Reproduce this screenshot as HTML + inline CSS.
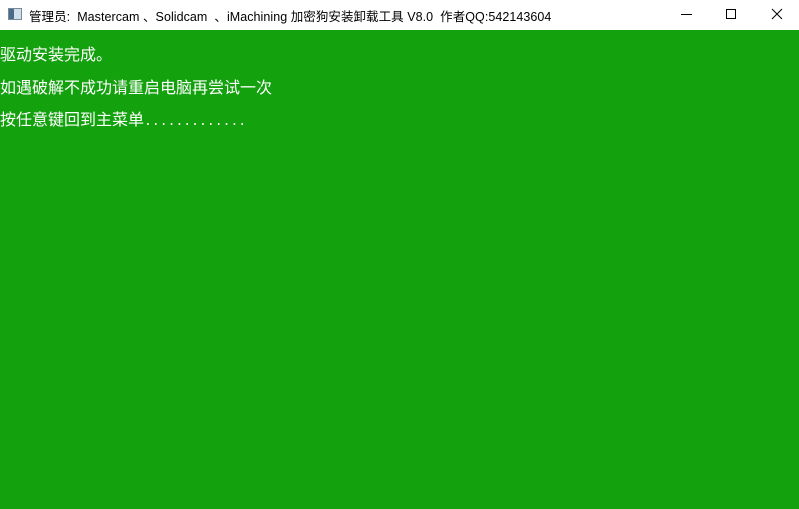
<!DOCTYPE html>
<html><head><meta charset="utf-8"><style>
html,body{margin:0;padding:0;width:799px;height:509px;overflow:hidden;background:#13a10e}
.tb{position:absolute;left:0;top:0;width:799px;height:30px;background:#fff;font:12.5px "Liberation Sans","Noto Sans CJK SC",sans-serif;color:#000}
.tt{position:absolute;left:29px;top:6px;white-space:nowrap;letter-spacing:0.05px}
.ic{position:absolute;left:8px;top:8px;width:14px;height:12px;border:1px solid #7a8a99;box-sizing:border-box;background:linear-gradient(90deg,#4a6a8a 0 40%,#cfe0ea 40%)}
.l{position:absolute;left:0;color:#fff;font:16px "Noto Sans CJK SC",sans-serif;white-space:nowrap;line-height:16px}
.d{letter-spacing:0;font-family:"Liberation Mono",monospace}
</style></head><body>
<div class="tb"><div class="ic"></div>
<div class="tt">管理员:&nbsp; Mastercam 、Solidcam &nbsp;、iMachining 加密狗安装卸载工具 V8.0 &nbsp;作者QQ:542143604</div>
<svg style="position:absolute;left:600px;top:0" width="199" height="30">
<line x1="81" y1="14.5" x2="92" y2="14.5" stroke="#000"/>
<rect x="126.5" y="9.5" width="9" height="9" fill="none" stroke="#000"/>
<path d="M172 9 L182 19 M182 9 L172 19" stroke="#000" stroke-width="1"/>
</svg></div>
<div class="l" style="top:45px">驱动安装完成。</div>
<div class="l" style="top:78px">如遇破解不成功请重启电脑再尝试一次</div>
<div class="l" style="top:110px">按任意键回到主菜单<span class="d" style="font-size:13.1px">.............</span></div>
</body></html>
